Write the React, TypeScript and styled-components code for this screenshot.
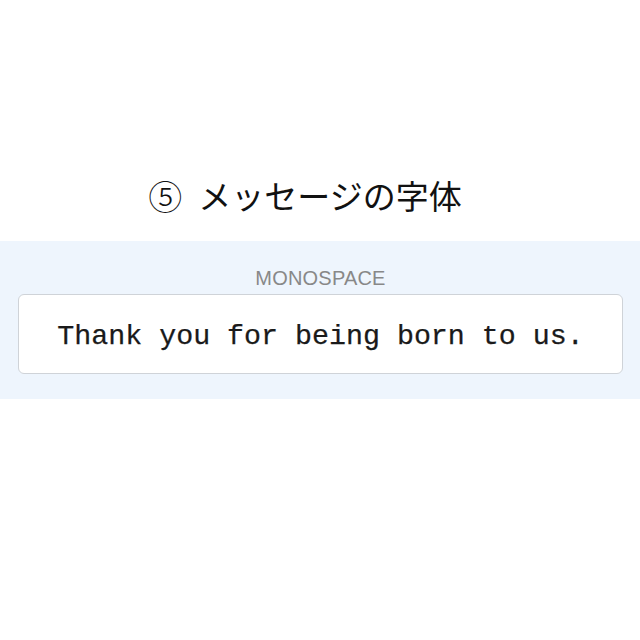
import styled, { createGlobalStyle } from "styled-components";

const GlobalStyle = createGlobalStyle`
  html, body {
    margin: 0;
    padding: 0;
    background: #ffffff;
  }
`;

const Page = styled.div`
  width: 640px;
  height: 640px;
  display: flex;
  flex-direction: column;
`;

const Title = styled.h1`
  margin: 175px 0 0;
  height: 40px;
  display: flex;
  align-items: center;
  justify-content: center;
  padding-right: 30px;
  font-family: "Liberation Serif", "Noto Sans CJK JP", serif;
  font-weight: 400;
  font-size: 33px;
  color: #111;
`;

const CircleNum = styled.span`
  font-family: "DejaVu Sans", "Noto Sans CJK JP", sans-serif;
  font-size: 34px;
  font-weight: 300;
  margin-right: 16px;
`;

const Band = styled.section`
  margin-top: 26px;
  background: #eef5fd;
  padding: 25px 17px 25px 18px;
  display: flex;
  flex-direction: column;
  gap: 4px;
`;

const Label = styled.div`
  height: 24px;
  line-height: 24px;
  text-align: center;
  font-family: "Liberation Sans", Arial, sans-serif;
  font-size: 20px;
  letter-spacing: 0.2px;
  color: #888888;
`;

const MessageBox = styled.div`
  height: 80px;
  box-sizing: border-box;
  padding-top: 4px;
  background: #ffffff;
  border: 1px solid #cfd3d8;
  border-radius: 6px;
  display: flex;
  align-items: center;
  justify-content: center;
  font-family: "Liberation Mono", "Courier New", monospace;
  font-size: 28.3px;
  color: #1a1a1a;
  -webkit-text-stroke: 0.25px #1a1a1a;
`;

export default function App() {
  return (
    <Page>
      <GlobalStyle />
      <Title>
        <CircleNum>⑤</CircleNum>
        メッセージの字体
      </Title>
      <Band>
        <Label>MONOSPACE</Label>
        <MessageBox>Thank you for being born to us.</MessageBox>
      </Band>
    </Page>
  );
}
